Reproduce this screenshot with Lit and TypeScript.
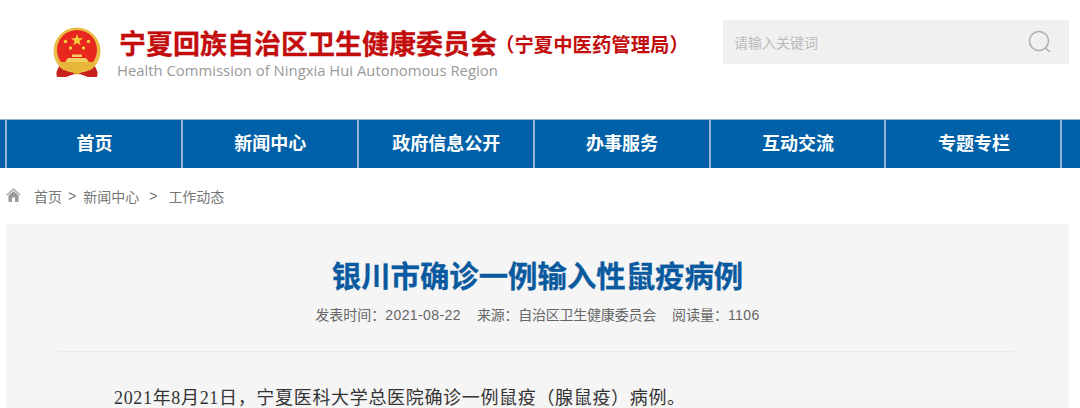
import { LitElement, html, css } from "lit";
import { customElement } from "lit/decorators.js";

const NAV = ["首页", "新闻中心", "政府信息公开", "办事服务", "互动交流", "专题专栏"];

@customElement("app-root")
export class AppRoot extends LitElement {
  static styles = css`
    :host { display: block; width: 1080px; height: 408px; overflow: hidden; background: #fff;
      font-family: "Liberation Sans", "Noto Sans CJK SC", sans-serif; }
    .header { height: 119px; display: flex; box-sizing: border-box; }
    .emblem { width: 50px; height: 52px; margin: 27px 15px 0 52px; flex: none; display: block; }
    .brand { padding-top: 28px; flex: none; width: 606px; }
    .cn { display: flex; align-items: center; height: 35px; color: #c30d0d; font-weight: 700; white-space: nowrap; }
    .cn-main { font-size: 27px; line-height: 35px; letter-spacing: 0; margin-left: 2px; -webkit-text-stroke: 0.3px #c30d0d; }
    .cn-sub { font-size: 19.4px; line-height: 35px; letter-spacing: 0; margin-left: -2px; }
    .en { font-family: "Open Sans", sans-serif; font-size: 14.85px; line-height: 18px; color: #999; margin-top: -2px; white-space: nowrap; }
    .search { width: 346px; height: 44px; margin-top: 20px; background: #f0f0f0; display: flex; align-items: center; justify-content: space-between; padding: 0 17px 0 11px; box-sizing: border-box; flex: none; }
    .search span { font-size: 14px; color: #bbb; }
    .search svg { width: 24px; height: 24px; display: block; }
    .nav { height: 49px; background: #0060a8; display: flex; padding-left: 5px; box-sizing: border-box; border-top: 1px solid #8fb8d8; }
    .nav-item { width: 175.9px; flex: none; border-left: 2px solid #8fb4d4; box-sizing: border-box; color: #fff; font-weight: 700; font-size: 18px; text-align: center; line-height: 48px; padding-left: 1px; }
    .nav-end { width: 0; flex: none; border-left: 2px solid #8fb4d4; }
    .crumbs { height: 56px; display: flex; align-items: center; font-size: 14px; color: #777; padding-left: 6px; box-sizing: border-box; white-space: nowrap; }
    .crumbs svg { width: 15px; height: 15px; margin-right: 13px; display: block; flex: none; position: relative; top: -2px; }
    .sep { font-size: 14px; margin: 0 7px 0 6px; }
    .sep.wide { margin: 0 11px 0 10px; }
    .card { margin: 0 11px 0 6px; height: 184px; background: #f5f5f5; box-sizing: border-box; padding: 0 55px 0 53px; }
    .title { margin: 0; padding-top: 34px; font-size: 29.4px; line-height: 38px; font-weight: 700; color: #0a5aa0; text-align: center; -webkit-text-stroke: 0.3px #0a5aa0; padding-left: 2px; }
    .meta { display: flex; justify-content: center; gap: 16px; margin-top: 9px; font-size: 14px; line-height: 20px; color: #666; white-space: nowrap; padding-left: 2px; }
    .num { letter-spacing: 0.4px; }
    .src { letter-spacing: -0.23px; }
    .rule { height: 1px; background: #e9e9e9; margin-top: 26px; }
    .body { margin: 0; padding: 35px 0 0 55px; font-family: "Liberation Serif", "Noto Sans CJK SC", serif; font-size: 18px; line-height: 22px; color: #333; white-space: nowrap; letter-spacing: 0.67px; }
  `;

  render() {
    return html`
      <div class="header">
        <svg class="emblem" viewBox="0 0 50 52" aria-hidden="true">
          <path d="M8 38 Q3 45 5 50 L14 50 L25 46 L36 50 L45 50 Q47 45 42 38 Z" fill="#c8201c"/>
          <circle cx="25" cy="24" r="23.5" fill="#e8bd45"/>
          <circle cx="25" cy="23" r="20" fill="#e8281f"/>
          <polygon points="25,7 26.5,11.3 31,11.3 27.4,14 28.7,18.3 25,15.7 21.3,18.3 22.6,14 19,11.3 23.5,11.3" fill="#f4d13c"/>
          <circle cx="13.5" cy="14.5" r="1.7" fill="#f4d13c"/>
          <circle cx="36.5" cy="14.5" r="1.7" fill="#f4d13c"/>
          <circle cx="18.5" cy="21" r="1.7" fill="#f4d13c"/>
          <circle cx="31.5" cy="21" r="1.7" fill="#f4d13c"/>
          <path d="M13 35 L16 31 H34 L37 35 Z M20 30 H30 V27.5 H20 Z" fill="#f2cf63"/>
          <path d="M7 35 H43 L38 43 H12 Z" fill="#e7b537"/>
          <path d="M12 43 Q25 49 38 43 L41 50 L25 46 L9 50 Z" fill="#c8201c"/>
          <rect x="21" y="41" width="8" height="5" fill="#e7b537"/>
        </svg>
        <div class="brand">
          <div class="cn"><span class="cn-main">宁夏回族自治区卫生健康委员会</span><span class="cn-sub">（宁夏中医药管理局）</span></div>
          <div class="en">Health Commission of Ningxia Hui Autonomous Region</div>
        </div>
        <div class="search">
          <span>请输入关键词</span>
          <svg viewBox="0 0 24 24" fill="none" stroke="#b0b0b0" stroke-width="1.6" aria-hidden="true">
            <circle cx="11" cy="11" r="9.5"/>
            <path d="M17.5 18 L22 22"/>
          </svg>
        </div>
      </div>
      <nav class="nav">
        ${NAV.map((n) => html`<div class="nav-item">${n}</div>`)}
        <div class="nav-end"></div>
      </nav>
      <div class="crumbs">
        <svg viewBox="0 0 15 15" aria-hidden="true">
          <path d="M7.5 1 L15 8 L13.5 8.5 L7.5 3 L1.5 8.5 L0 8 Z" fill="#aaa"/>
          <path d="M2.5 8.5 L7.5 4 L12.5 8.5 V15 H9 V10.5 H6 V15 H2.5 Z" fill="#999"/>
        </svg>
        <span>首页</span><span class="sep">&gt;</span><span>新闻中心</span><span class="sep wide">&gt;</span><span>工作动态</span>
      </div>
      <div class="card">
        <h1 class="title">银川市确诊一例输入性鼠疫病例</h1>
        <div class="meta">
          <span>发表时间：<span class="num">2021-08-22</span></span><span class="src">来源：自治区卫生健康委员会</span><span>阅读量：<span class="num">1106</span></span>
        </div>
        <div class="rule"></div>
        <p class="body">2021年8月21日，宁夏医科大学总医院确诊一例鼠疫（腺鼠疫）病例。</p>
      </div>
    `;
  }
}
